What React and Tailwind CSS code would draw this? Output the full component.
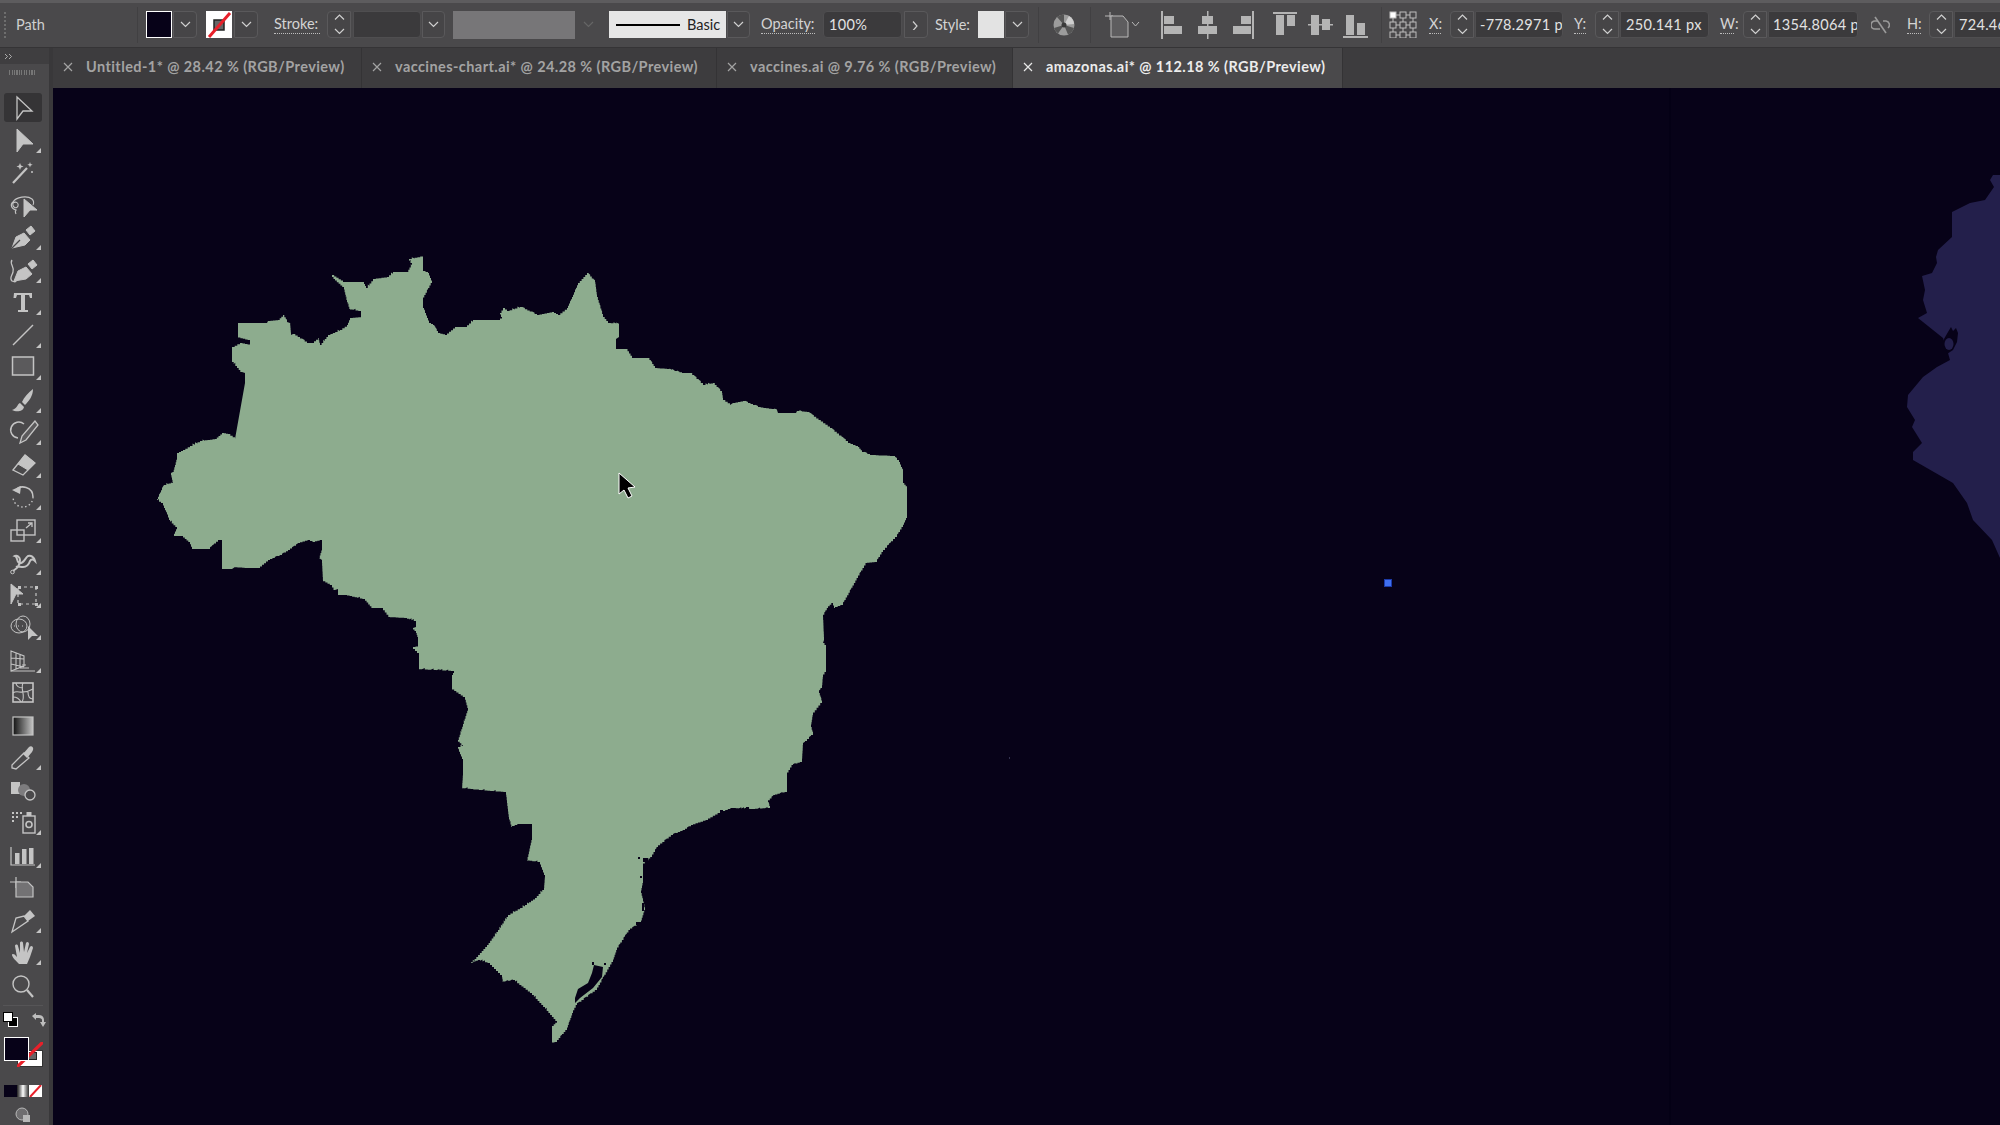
import React from "react";

const FONT = "font-['Lato','Open_Sans',sans-serif]";

const BRAZIL = "157,499 162,488 164,485 173,482 171,473 173,472 175,465 177,457 177,453 183,450 190,446 200,441 215,439 222,433 228,434 235,439 245,383 245,373 242,372 232,360 232,347 240,343 250,345 250,340 238,337 238,323 267,323 268,321 278,320 283,315 287,322 290,323 291,335 293,334 307,343 312,343 318,338 320,345 328,335 340,330 347,325 350,318 361,317 361,311 350,309 347,300 344,287 335,279 332,275 343,282 363,282 366,288 373,279 387,277 393,272 407,272 412,263 409,259 423,256 423,271 428,273 432,283 423,300 423,308 429,323 433,325 438,333 445,335 455,327 465,327 473,320 498,320 502,317 500,313 503,308 507,311 520,307 537,315 552,312 558,315 567,308 572,297 578,283 587,273 595,282 597,297 603,317 608,323 619,324 619,337 616,339 616,349 626,349 632,358 648,358 655,368 667,369 682,373 690,373 703,385 713,383 722,393 723,400 730,405 733,403 743,401 758,407 777,410 778,413 796,413 797,411 807,412 830,428 848,443 858,447 862,452 870,455 893,456 899,462 903,472 903,483 907,488 907,518 903,527 897,537 883,552 877,562 867,563 858,578 843,605 835,608 833,603 828,608 823,617 824,640 823,643 826,647 826,672 823,677 822,688 819,693 822,703 813,715 811,727 813,735 803,745 802,762 793,765 787,775 787,792 775,795 768,802 770,808 755,809 733,808 720,813 708,820 693,825 685,830 673,835 658,847 652,857 643,865 643,883 641,893 645,910 641,923 630,930 617,950 613,962 597,990 577,1005 573,1013 567,1030 557,1042 552,1043 552,1026 557,1021 545,1007 532,993 515,980 503,982 502,975 490,963 480,960 471,963 487,945 498,930 508,915 525,905 535,898 544,888 545,875 540,862 527,860 532,837 532,824 520,824 512,827 509,817 506,792 493,791 462,788 463,773 463,759 458,747 463,745 458,740 468,708 465,697 452,688 452,675 454,671 419,669 419,653 413,647 418,646 418,637 416,631 413,628 416,627 416,621 407,618 390,617 383,608 373,608 365,599 347,595 338,595 338,589 335,590 332,585 323,580 322,560 319,558 322,548 322,540 315,542 310,540 300,543 290,550 282,555 270,560 260,568 247,568 235,567 232,569 222,569 222,540 220,540 210,549 193,549 190,542 183,536 173,536 177,527 170,520 163,503";
const LAKE = "575,1003 575,998 578,989 588,983 592,973 594,965 603,967 602,977 593,988 580,998";
const AFRICA = "2000,175 1993,175 1990,180 1994,187 1985,200 1970,203 1952,212 1952,237 1938,250 1936,257 1937,263 1932,273 1922,276 1925,290 1923,300 1927,313 1918,318 1943,338 1946,346 1950,360 1937,367 1923,377 1908,395 1907,407 1915,420 1912,427 1922,443 1913,452 1913,460 1953,483 1967,503 1973,520 1992,540 2000,558";

// The source map is a low-resolution trace: its coast runs in small pixel stairs.
function stairs(points) {
  const pts = points.split(" ").map((p) => p.split(",").map(Number));
  const out = [];
  pts.forEach((a, idx) => {
    const b = pts[(idx + 1) % pts.length];
    const dx = b[0] - a[0];
    const dy = b[1] - a[1];
    const len = Math.hypot(dx, dy);
    out.push(a.join(","));
    if (len > 40 || len < 4 || dx === 0 || dy === 0) return;
    const n = Math.ceil(len / 3);
    for (let i = 1; i < n; i++) {
      const x = a[0] + (dx * i) / n;
      const y = a[1] + (dy * i) / n;
      const h = Math.abs(Math.sin(x * 12.9898 + y * 78.233) * 43758.5453) % 1;
      const j = h > 0.8 ? 1.2 : 0;
      out.push(`${x.toFixed(1)},${(a[1] + (dy * (i - 1)) / n).toFixed(1)}`);
      out.push(`${x.toFixed(1)},${(y - j).toFixed(1)}`);
    }
    out.push(`${b[0]},${(a[1] + (dy * (n - 1)) / n).toFixed(1)}`);
  });
  return out.join(" ");
}
const BRAZIL_STEPPED = stairs(BRAZIL);

function Chev({ dim, dir = "down" }) {
  const d = dir === "down" ? "M1 1.5l4.5 4.5L10 1.5" : dir === "up" ? "M1 6l4.5-4.5L10 6" : "M2 1l4 4.5L2 10";
  return (
    <svg width="11" height="11" viewBox="0 0 11 8" fill="none" stroke={dim ? "#666" : "#d0d0d0"} strokeWidth="1.2"><path d={d} /></svg>
  );
}

function ChevBox({ className, dim, dir }) {
  return (
    <div className={`shrink-0 h-[27px] rounded-r-[4px] flex items-center justify-center ${dim ? "" : "border border-[#5a595b] bg-[#464547]"} ${className}`}>
      <Chev dim={dim} dir={dir} />
    </div>
  );
}

function Spinner({ className }) {
  return (
    <div className={`shrink-0 w-[24px] h-[27px] rounded-l-[4px] border border-[#5a595b] bg-[#464547] flex flex-col items-center justify-center gap-[3px] ${className}`}>
      <Chev dir="up" />
      <Chev />
    </div>
  );
}

function Val({ className, children }) {
  return (
    <div className={`shrink-0 h-[27px] rounded-r-[4px] border border-[#4f4e50] bg-[#3b3a3c] flex items-center overflow-hidden whitespace-nowrap text-[14.5px] tracking-[0.3px] text-[#e2e2e2] ${className}`}>
      {children}
    </div>
  );
}

function Lab({ className, children, plain }) {
  return (
    <div className={`shrink-0 text-[14.5px] leading-[18px] whitespace-nowrap text-[#d4d4d4] ${plain ? "" : "border-b border-dotted border-[#bdbdbd]"} ${className}`}>
      {children}
    </div>
  );
}

const Sep = ({ className }) => <div className={`shrink-0 w-px h-[36px] bg-[#414042] ${className}`} />;

function NoneSwatch({ className }) {
  return (
    <div className={`shrink-0 bg-white ${className}`}>
      <svg viewBox="0 0 26 27" className="block w-full h-full">
        <rect x="8" y="9" width="10" height="10" fill="#666" stroke="#222" strokeWidth="1.5" />
        <line x1="3" y1="26" x2="24" y2="2" stroke="#e8202a" strokeWidth="3" />
      </svg>
    </div>
  );
}

function Align({ className, w, h, children }) {
  return (
    <svg className={`shrink-0 ${className}`} width={w} height={h} viewBox={`0 0 ${w} ${h}`} fill="#b4b4b4">
      {children}
    </svg>
  );
}

function AnchorGrid({ className }) {
  const cells = [];
  [0, 1, 2].forEach((r) =>
    [0, 1, 2].forEach((c) =>
      cells.push(
        <rect key={`${r}${c}`} x={1 + c * 10} y={1 + r * 10} width="6" height="6" fill={r + c === 0 ? "#fff" : "none"} stroke="#bdbdbd" />
      )
    )
  );
  return (
    <svg className={`shrink-0 ${className}`} width="28" height="27" viewBox="0 0 28 27">
      {cells}
      <path d="M7 4h4M17 4h4M7 14h4M17 24h4M7 24h4M17 14h4M4 7v4M14 7v4M24 7v4M4 17v4M14 17v4M24 17v4" stroke="#bdbdbd" />
    </svg>
  );
}

function TopBar() {
  return (
    <div className={`shrink-0 w-[2000px] h-[48px] bg-[#4a494b] border-t-[3px] border-b border-t-[#5d5c5e] border-b-[#353436] flex items-center pb-[1px] overflow-hidden ${FONT}`}>
      <div className="shrink-0 ml-[4px] w-[2px] h-[26px] border-l-2 border-dotted border-[#6e6e6e]" />
      <div className="shrink-0 ml-[10px] w-[40px] text-[14.5px] text-[#cfcfcf]">Path</div>
      <Sep className="ml-[81px]" />
      <div className="shrink-0 ml-[8px] w-[26px] h-[27px] bg-[#070218] border-[1.5px] border-white" />
      <ChevBox className="ml-[1px] w-[24px]" />
      <NoneSwatch className="ml-[9px] w-[26px] h-[27px]" />
      <ChevBox className="ml-[2px] w-[24px]" />
      <Lab className="ml-[16px] w-[46px]">Stroke:</Lab>
      <Spinner className="ml-[7px]" />
      <Val className="ml-[2px] w-[68px]" />
      <ChevBox className="ml-[1px] w-[23px]" />
      <div className="shrink-0 ml-[8px] w-[122px] h-[28px] bg-[#777678]" />
      <ChevBox dim className="ml-[1px] w-[24px]" />
      <div className="shrink-0 ml-[9px] w-[117px] h-[27px] bg-[#e6e6e6] flex items-center">
        <div className="shrink-0 ml-[7px] w-[64px] h-[2px] bg-black" />
        <div className="ml-[7px] text-[14.5px] text-[#222]">Basic</div>
      </div>
      <ChevBox className="ml-[1px] w-[23px]" />
      <Lab className="ml-[11px] w-[54px]">Opacity:</Lab>
      <Val className="ml-[8px] w-[79px] pl-[5px] rounded-[4px]">100%</Val>
      <ChevBox dir="right" className="ml-[2px] w-[24px]" />
      <Lab plain className="ml-[7px] w-[35px] text-[#bdbdbd]">Style:</Lab>
      <div className="shrink-0 ml-[8px] w-[26px] h-[27px] bg-[#e3e3e3]" />
      <ChevBox className="ml-[1px] w-[24px]" />
      <Sep className="ml-[9px]" />
      <svg className="shrink-0 ml-[14px]" width="22" height="22" viewBox="0 0 22 22">
        <circle cx="11" cy="11" r="10.5" fill="#9c9c9c" />
        <path d="M11 11L4 3A10.5 10.5 0 0 1 11 .5zM11 11l10 3a10.5 10.5 0 0 1-6 6.5zM11 11L1 14a10.5 10.5 0 0 0 4 5.5z" fill="#555" />
        <path d="M11 11L16 2a10.5 10.5 0 0 1 5 8z" fill="#cfcfcf" />
        <circle cx="11" cy="11" r="2.5" fill="#3a3a3a" />
      </svg>
      <Sep className="ml-[15px]" />
      <svg className="shrink-0 ml-[14px]" width="35" height="28" viewBox="0 0 35 28" fill="none" stroke="#b8b8b8">
        <path d="M0 5h8M5 1v8" />
        <path d="M6 5h12l5 6v15H6z" fill="#5e5d5f" />
        <path d="M27 11l3.5 4 3.5-4" />
      </svg>
      <Align className="ml-[21px]" w={21} h={28}>
        <rect x="0" y="0" width="2" height="28" />
        <rect x="3" y="5" width="10" height="8" />
        <rect x="3" y="15" width="18" height="8" />
      </Align>
      <Align className="ml-[16px]" w={19} h={28}>
        <rect x="9" y="0" width="1.5" height="28" />
        <rect x="4" y="5" width="11" height="8" />
        <rect x="0" y="15" width="19" height="8" />
      </Align>
      <Align className="ml-[16px]" w={21} h={28}>
        <rect x="19" y="0" width="2" height="28" />
        <rect x="8" y="5" width="10" height="8" />
        <rect x="0" y="15" width="18" height="8" />
      </Align>
      <Align className="ml-[19px]" w={24} h={28}>
        <rect x="0" y="1" width="24" height="2" />
        <rect x="3" y="4" width="8" height="20" />
        <rect x="14" y="4" width="8" height="11" />
      </Align>
      <Align className="ml-[11px]" w={25} h={28}>
        <rect x="0" y="13" width="25" height="1.5" />
        <rect x="3" y="4" width="8" height="20" />
        <rect x="14" y="8" width="8" height="11" />
      </Align>
      <Align className="ml-[10px]" w={25} h={28}>
        <rect x="0" y="25" width="25" height="2" />
        <rect x="3" y="4" width="8" height="20" />
        <rect x="14" y="12" width="8" height="12" />
      </Align>
      <Sep className="ml-[13px]" />
      <AnchorGrid className="ml-[7px]" />
      <Lab className="ml-[12px] w-[12px]">X:</Lab>
      <Spinner className="ml-[9px]" />
      <Val className="ml-[1px] w-[88px] pl-[4px]">-778.2971 p</Val>
      <Lab className="ml-[11px] w-[12px]">Y:</Lab>
      <Spinner className="ml-[9px]" />
      <Val className="ml-[1px] w-[89px] pl-[5px]">250.141 px</Val>
      <Lab className="ml-[11px] w-[14px]">W:</Lab>
      <Spinner className="ml-[9px]" />
      <Val className="ml-[1px] w-[90px] pl-[4px]">1354.8064 p</Val>
      <svg className="shrink-0 ml-[13px]" width="19" height="18" viewBox="0 0 19 18" fill="none" stroke="#9a9a9a" strokeWidth="1.6">
        <path d="M4 1l11 16" />
        <path d="M7 5H4a4 4 0 0 0 0 8h5M12 5h3a4 4 0 0 1 2 7" />
      </svg>
      <Lab className="ml-[17px] w-[14px]">H:</Lab>
      <Spinner className="ml-[8px]" />
      <Val className="ml-[1px] w-[60px] pl-[4px] rounded-none border-r-0">724.46</Val>
    </div>
  );
}

function Tab({ className, active, children }) {
  return (
    <div className={`shrink-0 h-full pl-[10px] pb-[2px] flex items-center whitespace-nowrap text-[14.5px] tracking-[0.42px] font-bold border-r border-[#343335] ${active ? "bg-[#4a494b] text-[#ececec]" : "text-[#a3a3a3]"} ${className}`}>
      <svg width="10" height="10" viewBox="0 0 10 10" stroke={active ? "#e8e8e8" : "#a3a3a3"} strokeWidth="1.2" className="shrink-0">
        <path d="M1 1l8 8M9 1L1 9" />
      </svg>
      <span className="ml-[13px]">{children}</span>
    </div>
  );
}

const Flag = () => <path d="M41 24v5h-5z" fill="#c4c4c4" stroke="none" />;

const TOOLS = [
  [<path d="M17 6L32 20H23L17 28Z" fill="none" strokeWidth="1.3" />],
  [<path d="M17 5L33 20H23L17 28Z" fill="#c4c4c4" />, <Flag />],
  [<path d="M13 27L27 12" strokeWidth="2.2" />, <path d="M20 7l1 2.5 2.5 1-2.5 1-1 2.5-1-2.5-2.5-1 2.5-1zM30 6l.7 2 2 .7-2 .7-.7 2-.7-2-2-.7 2-.7z" fill="#c4c4c4" stroke="none" />, <circle cx="32" cy="16" r="1" fill="#c4c4c4" stroke="none" />],
  [<path d="M16 25c-1-2-1-3 0-4-5-1-6-6-3-8 3-5 14-7 19-3 2 2 2 4 1 6M13 14c3-2 6 0 5 3s-6 2-5-3z" fill="none" strokeWidth="1.1" />, <path d="M24 10L37 21H30L24 28Z" fill="#c4c4c4" />],
  [<path d="M12 27l4-11 8-4 6 7-5 5z" fill="#c4c4c4" />, <path d="M26 9l5-4 4 5-5 4z" fill="#c4c4c4" />, <path d="M12 27l8-8" stroke="#4a494b" strokeWidth="1.2" />, <Flag />],
  [<path d="M14 27l4-10 8-4 6 7-6 5z" fill="#c4c4c4" />, <path d="M28 10l5-4 4 5-5 4z" fill="#c4c4c4" />, <path d="M12 6c-3 4 3 7 1 12-1 4-4 6-1 9 2 1 4 1 4 0" fill="none" strokeWidth="1.3" />, <Flag />],
  [<path d="M14 7h18v5h-2l-1-3h-4v15h3v2H18v-2h3V9h-4l-1 3h-2.5z" fill="#c4c4c4" stroke="none" />, <Flag />],
  [<path d="M13 26L33 6" strokeWidth="1.4" />, <Flag />],
  [<rect x="12.5" y="6" width="21" height="18" fill="#5b5a5c" strokeWidth="1.5" />, <Flag />],
  [<path d="M33 5C28 9 24 13 22 18l3 3c4-4 8-9 8-16zM20 19c-3 1-2 5-8 7 4 2 11 2 12-3z" fill="#c4c4c4" stroke="none" />, <Flag />],
  [<path d="M18 22a8 8 0 1 1 6-14" fill="none" strokeWidth="1.5" />, <path d="M35 5L22 20l-2 7 6-3L38 9z" fill="#5b5a5c" strokeWidth="1.3" />, <Flag />],
  [<path d="M13 21L25 6l10 8-12 12z" fill="none" strokeWidth="1.3" />, <path d="M18 15L25 6l10 8-7 7z" fill="#c4c4c4" />, <Flag />],
  [<path d="M15 10A10 10 0 0 1 33 16" fill="none" strokeWidth="1.5" />, <path d="M33 16A10 10 0 0 1 13 16" fill="none" strokeWidth="1.4" strokeDasharray="1.5 2.5" />, <path d="M12 9l9-4-1 8z" fill="#c4c4c4" stroke="none" />, <Flag />],
  [<rect x="17" y="6" width="18" height="15" fill="none" strokeWidth="1.4" />, <rect x="11" y="16" width="13" height="11" fill="none" strokeWidth="1.4" />, <path d="M26 14l6-5M28 9h4v4" fill="none" strokeWidth="1.3" />, <Flag />],
  [<path d="M13 25c5-3 7-7 7-11 0-3-3-5-5-4 3 1 1 5 4 7 4 2 6-5 9-7 3-1 6 1 7 5-2-2-4-2-5 0-1 3-3 6-7 6-3 0-5-1-7 0" fill="none" strokeWidth="2" />, <circle cx="12.5" cy="26" r="1.8" fill="none" />, <Flag />],
  [<path d="M11 5l12 10h-7l-5 10z" fill="#c4c4c4" />, <rect x="18" y="8" width="18" height="17" fill="none" strokeWidth="1.2" strokeDasharray="3 3" />, <path d="M18 7h3v3h-3zM35 7h3v3h-3zM35 24h3v3h-3zM18 24h3v3h-3z" fill="#c4c4c4" stroke="none" />, <Flag />],
  [<ellipse cx="19" cy="15" rx="8" ry="7" fill="none" strokeWidth="1" />, <ellipse cx="23" cy="13" rx="7" ry="8" fill="none" strokeWidth="1" />, <path d="M14 15h1M18 15h1M22 15h1" strokeWidth="1" />, <path d="M28 15l10 10h-6l-4 4z" fill="#c4c4c4" stroke="none" />, <Flag />],
  [<path d="M11 7l13 5v10l-13 5zM11 14l13 1M11 20l13 3M16 9v16M20 11v13" fill="none" strokeWidth="1.1" />, <path d="M11 27h24M20 24h9M22 21h4" strokeWidth="1.1" />, <Flag />],
  [<rect x="13" y="7" width="20" height="19" fill="none" strokeWidth="1.6" />, <path d="M13 17c5-4 8 3 20-4M23 7c-3 6 3 12-1 19M16 7c0 3 3 5 7 5M13 21c4 0 6 1 8 5M28 16c0 4 1 7 5 7" fill="none" strokeWidth="1.1" />],
  [<rect x="13" y="8" width="20" height="18" fill="url(#toolgrad)" strokeWidth="1.2" />],
  [<path d="M12 27l0-3 12-12 5 5-13 11z" fill="none" strokeWidth="1.3" />, <path d="M23 13l6-7c2-2 5 0 4 3l-1 2-5 6z" fill="#c4c4c4" stroke="none" />, <Flag />],
  [<rect x="11" y="8" width="9" height="12" fill="#c4c4c4" stroke="none" />, <circle cx="24" cy="16" r="6" fill="#7d7c7e" stroke="none" />, <circle cx="30" cy="21" r="5" fill="#4a494b" strokeWidth="1.3" />],
  [<path d="M12 7h2M16 7h2M20 7h2M12 11h2M16 11h2M12 15h2" strokeWidth="1.8" />, <rect x="23" y="10" width="12" height="17" fill="none" strokeWidth="1.4" />, <rect x="26.5" y="6" width="5" height="4" fill="#c4c4c4" stroke="none" />, <circle cx="29" cy="18.5" r="3" fill="none" strokeWidth="1.6" />, <Flag />],
  [<path d="M11 8v18h24" fill="none" strokeWidth="1.2" />, <rect x="15" y="14" width="4.5" height="11" fill="#c4c4c4" stroke="none" />, <rect x="22" y="10" width="4.5" height="15" fill="#c4c4c4" stroke="none" />, <rect x="29" y="9" width="4.5" height="16" fill="#c4c4c4" stroke="none" />, <Flag />],
  [<path d="M10 11h11M16 6v11" strokeWidth="1.2" />, <path d="M16 11h12l5 5v10H16z" fill="#737274" strokeWidth="1.2" />],
  [<path d="M12 28l4-14 8-2 4 5z" fill="none" strokeWidth="1.3" />, <path d="M24 12l6-6 5 6-7 5z" fill="#c4c4c4" stroke="none" />, <Flag />],
  [<path d="M19 28c-3-3-7-7-7-9 0-2 3-1 4 1l1 1-2-11c0-2 3-2 3 0l2 7 0-10c0-2 3-2 3 0l1 9 2-9c1-2 3-1 3 1l-2 9 3-6c1-2 3-1 3 1l-3 9-3 7z" fill="#c4c4c4" stroke="none" />, <Flag />],
  [<circle cx="21" cy="15" r="8" fill="none" strokeWidth="1.4" />, <path d="M27 21l6 7" strokeWidth="2.2" />],
];

function Tool({ selected, children }) {
  return (
    <div className="shrink-0 h-[32.5px] w-[46px] relative flex items-center justify-center">
      {selected && <div className="absolute left-[4px] top-[2px] w-[38px] h-[29px] rounded-[3px] bg-[#353436]" />}
      <svg className="relative block" width="46" height="32" viewBox="0 0 46 32" fill="none" stroke="#c4c4c4">
        {children.map((c, i) => <React.Fragment key={i}>{c}</React.Fragment>)}
      </svg>
    </div>
  );
}

function LeftBar() {
  return (
    <div className="shrink-0 w-[53px] h-full bg-[#4a494b] border-r-4 border-[#39383a] flex flex-col overflow-hidden">
      <div className="shrink-0 h-[16px] bg-[#3f3e40] flex items-center pl-[4px]">
        <svg width="9" height="7" viewBox="0 0 9 7" fill="none" stroke="#b8b8b8" strokeWidth="0.9"><path d="M1 1l2.5 2.5L1 6M5 1l2.5 2.5L5 6" /></svg>
      </div>
      <div className="shrink-0 h-[27px] pt-[6px] pl-[9px]">
        <div className="w-[26px] h-[5px] border-x-0 bg-[repeating-linear-gradient(90deg,#777_0,#777_1px,transparent_1px,transparent_2.5px)]" />
      </div>
      <svg width="0" height="0" className="absolute">
        <defs>
          <linearGradient id="toolgrad"><stop offset="0" stopColor="#111" /><stop offset="1" stopColor="#c4c4c4" /></linearGradient>
        </defs>
      </svg>
      {TOOLS.map((t, i) => <Tool key={i} selected={i === 0}>{t}</Tool>)}
      <div className="shrink-0 mt-[4px] mx-[3px] w-[40px] h-px bg-[#565557]" />
      <div className="shrink-0 mt-[6px] h-[16px] flex items-center">
        <div className="shrink-0 ml-[3px] w-[15px] h-[16px] relative">
          <div className="absolute left-[5px] top-[5px] w-[10px] h-[10px] bg-black border border-white" />
          <div className="absolute left-0 top-0 w-[10px] h-[10px] bg-white border border-black" />
        </div>
        <svg className="shrink-0 ml-[14px]" width="14" height="14" viewBox="0 0 14 14" fill="#bdbdbd">
          <path d="M0 3l4-3v2h3c3 0 5 2 5 5v2h2l-3 5-3-5h2V7c0-1-1-2-3-2H4v2z" />
        </svg>
      </div>
      <div className="shrink-0 mt-[9px] h-[30px] relative">
        <div className="absolute left-[17px] top-[13px] w-[26px] h-[17px] bg-white border border-[#333]">
          <div className="absolute right-[5px] top-[1px] w-[10px] h-[8px] bg-[#666] border border-[#222]" />
        </div>
        <svg className="absolute left-[17px] top-[5px]" width="26" height="25" viewBox="0 0 26 25"><line x1="0" y1="25" x2="26" y2="0" stroke="#e8202a" strokeWidth="3.2" /></svg>
        <div className="absolute left-[4px] top-0 w-[25px] h-[24px] bg-[#070218] border-[1.5px] border-white" />
      </div>
      <div className="shrink-0 mt-[18px] ml-[4px] flex h-[12px]">
        <div className="w-[13px] bg-[#070218]" />
        <div className="w-[12px] bg-gradient-to-r from-[#222] via-white to-[#333]" />
        <svg className="block" width="13" height="12" viewBox="0 0 13 12"><rect width="13" height="12" fill="#fff" /><line x1="1" y1="12" x2="12" y2="0" stroke="#e8202a" strokeWidth="2" /></svg>
      </div>
      <svg className="shrink-0 mt-[10px] ml-[15px]" width="16" height="16" viewBox="0 0 16 16">
        <circle cx="7" cy="7" r="6" fill="#6f6e70" stroke="#b8b8b8" />
        <rect x="8" y="8" width="7" height="7" fill="#b8b8b8" />
      </svg>
    </div>
  );
}

function Canvas() {
  return (
    <div className="flex-1 min-h-0 relative bg-[#070218]">
      <svg className="block w-full h-full" viewBox="53 88 1947 1037">
        <line x1="1670" y1="88" x2="1670" y2="1125" stroke="#040115" strokeWidth="1.5" />
        <polygon points={AFRICA} fill="#231f4b" />
        <path d="M1944 339l4-7 3-5 2 4 3-3 2 5-1 9-4 8-6 4-3-9z" fill="#070218" />
        <ellipse cx="1949" cy="344" rx="4.5" ry="6" fill="#231f4b" />
        <polygon points={BRAZIL_STEPPED} fill="#8dac8e" />
        <polygon points={LAKE} fill="#070218" />
        <path d="M643 858h5v4h-5zM638 857h2v2h-2zM640 876h2v2h-2zM642 903h2v8h-2zM636 922h5v3h-5zM746 807h3v2h-3zM720 810h3v3h-3zM706 821h2v4h-2zM592 962h2v3h-2zM604 963h2v2h-2z" fill="#070218" />
        <rect x="1384" y="579" width="8" height="8" fill="#1c3aa8" />
        <rect x="1385" y="580" width="6" height="6" fill="#3f6ff0" />
        <rect x="1009" y="757" width="1" height="2" fill="#33324f" />
        <path d="M619 473v21l5-4 4 8 4-2-4-8 7-1z" fill="#000" stroke="#fff" strokeWidth="1" />
      </svg>
    </div>
  );
}

export default function App() {
  return (
    <div className={`w-[2000px] h-[1125px] flex flex-col overflow-hidden bg-[#3d3c3e] ${FONT}`}>
      <TopBar />
      <div className="flex-1 min-h-0 flex">
        <LeftBar />
        <div className="flex-1 min-w-0 flex flex-col">
          <div className="shrink-0 h-[40px] flex bg-[#3d3c3e]">
            <Tab className="w-[309px]">Untitled-1* @ 28.42 % (RGB/Preview)</Tab>
            <Tab className="w-[355px]">vaccines-chart.ai* @ 24.28 % (RGB/Preview)</Tab>
            <Tab className="w-[296px]">vaccines.ai @ 9.76 % (RGB/Preview)</Tab>
            <Tab active className="w-[330px]">amazonas.ai* @ 112.18 % (RGB/Preview)</Tab>
          </div>
          <Canvas />
        </div>
      </div>
    </div>
  );
}
